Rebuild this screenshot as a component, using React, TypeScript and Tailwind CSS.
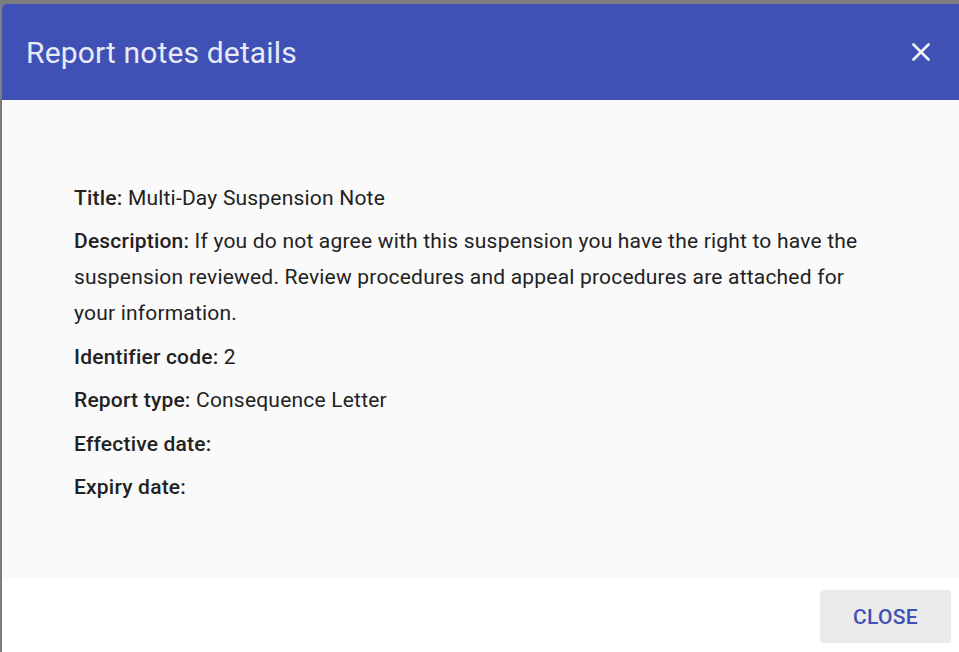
import { X } from "lucide-react";

const rows: { label: string; value?: string }[] = [
  { label: "Title:", value: "Multi-Day Suspension Note" },
  {
    label: "Description:",
    value:
      "If you do not agree with this suspension you have the right to have the suspension reviewed. Review procedures and appeal procedures are attached for your information.",
  },
  { label: "Identifier code:", value: "2" },
  { label: "Report type:", value: "Consequence Letter" },
  { label: "Effective date:" },
  { label: "Expiry date:" },
];

export default function App() {
  return (
    <div className="w-[959px] h-[652px] overflow-hidden bg-[#7d7d7d] pt-[4px] pl-[2px] font-['Roboto',sans-serif]">
      <div className="w-[960px] h-[660px] flex flex-col rounded-tl-[4px] overflow-hidden bg-white">
        <header className="h-[96px] shrink-0 bg-[#3f51b5] flex items-center justify-between pl-[24px] pr-[26px]">
          <h1 className="text-[30px] leading-none tracking-[0.15px] text-[#e8eaf6] font-normal pt-[2px]">
            Report notes details
          </h1>
          <X size={30} strokeWidth={2.2} className="text-[#eef0fa]" />
        </header>
        <main className="h-[478px] shrink-0 bg-[#fafafa] pl-[72px] pr-[90px] pt-[80px] flex flex-col gap-[7.4px] text-[21px] leading-[36px] tracking-[0.2px] text-[#222]">
          {rows.map((r) => (
            <p key={r.label}>
              <span className="font-medium">{r.label}</span>
              {r.value ? " " + r.value : ""}
            </p>
          ))}
        </main>
        <footer className="flex justify-end pt-[12px] pr-[11px]">
          <button className="w-[131px] h-[53px] rounded-[4px] bg-[#ebebeb] text-[#3f51b5] text-[21px] font-medium tracking-[0.3px] pt-[3px]">
            CLOSE
          </button>
        </footer>
      </div>
    </div>
  );
}
